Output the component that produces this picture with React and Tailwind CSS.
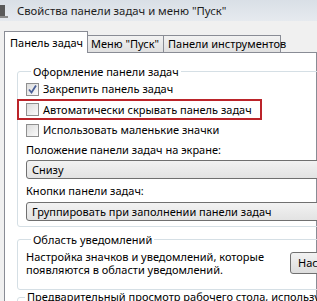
const Check = ({ checked }) => (
  <span className="w-[13px] h-[13px] shrink-0 border border-[#8f8f8f] bg-gradient-to-br from-[#dcdcdc] to-[#fbfbfb] flex items-center justify-center">
    {checked && (
      <svg width="11" height="11" viewBox="0 0 11 11">
        <path d="M2 5.5 L4.5 8.5 L9 1.5" fill="none" stroke="#4a5f97" strokeWidth="1.8" />
      </svg>
    )}
  </span>
);

const Select = ({ value }) => (
  <div className="h-[19px] w-[310px] border border-[#707070] rounded-[3px] bg-gradient-to-b from-[#f2f2f2] to-[#e3e3e3] flex items-center pl-[5px] whitespace-nowrap">
    {value}
  </div>
);

export default function App() {
  return (
    <div className="w-[317px] h-[301px] overflow-hidden bg-[#f0f0f0] text-black text-[11px] leading-[14px] font-['Noto_Sans',sans-serif]">
      {/* Title bar */}
      <div className="h-[21px] flex items-center bg-gradient-to-b from-[#d9dfe6] to-[#e6eaef]">
        <div className="w-[8px] h-[14px] flex flex-col justify-end">
          <div className="w-[5px] h-[11px] bg-[#5a5a5a]" />
          <div className="w-[8px] h-[2px] bg-[#8a8a8a]" />
        </div>
        <span className="ml-[9px] text-[11.3px] text-[#1e1e1e] whitespace-nowrap">Свойства панели задач и меню "Пуск"</span>
      </div>

      {/* Tabs */}
      <div className="flex items-end pl-[4px] pt-[10px] relative z-10 whitespace-nowrap">
        <div className="h-[22px] w-[84px] bg-white border border-b-0 border-[#898c95] flex items-center pl-[5px] -mb-px">
          Панель задач
        </div>
        <div className="h-[17px] w-[76px] border border-l-0 border-b-0 border-[#898c95] bg-gradient-to-b from-[#f2f2f2] to-[#e0e0e0] flex items-center pl-[3px]">
          Меню "Пуск"
        </div>
        <div className="h-[17px] w-[117px] border border-l-0 border-b-0 border-[#898c95] bg-gradient-to-b from-[#f2f2f2] to-[#e0e0e0] flex items-center pl-[4px]">
          Панели инструментов
        </div>
      </div>

      {/* Panel */}
      <div className="ml-[4px] h-[260px] border border-[#898c95] bg-white pl-[12px] pt-[11px] whitespace-nowrap">
        <fieldset className="border border-[#d5dfe5] rounded-[3px] pl-[8px] pb-[5px] w-[320px]">
          <legend className="ml-[5px] px-[2px] leading-[15px]">Оформление панели задач</legend>
          <div className="h-[20px] flex items-center gap-[4px]">
            <Check checked />
            <span>Закрепить панель задач</span>
          </div>
          <div className="h-[21px] -ml-[9px] pl-[7px] w-[245px] border-2 border-[#bb242a] flex items-center gap-[4px]">
            <Check />
            <span>Автоматически скрывать панель задач</span>
          </div>
          <div className="h-[20px] flex items-center gap-[4px]">
            <Check />
            <span>Использовать маленькие значки</span>
          </div>
          <div className="h-[20px] flex items-center">Положение панели задач на экране:</div>
          <Select value="Снизу" />
          <div className="h-[23px] flex items-center">Кнопки панели задач:</div>
          <Select value="Группировать при заполнении панели задач" />
        </fieldset>

        <fieldset className="mt-[5px] border border-[#d5dfe5] rounded-[3px] pl-[8px] pb-[13px] w-[320px]">
          <legend className="ml-[5px] px-[2px] leading-[15px]">Область уведомлений</legend>
          <div className="mt-[3px] flex items-center">
            <p className="w-[264px] leading-[13px]">
              Настройка значков и уведомлений, которые
              <br />
              появляются в области уведомлений.
            </p>
            <button className="h-[22px] px-[7px] border border-[#707070] rounded-[3px] bg-gradient-to-b from-[#f2f2f2] to-[#dddddd]">
              Настроить...
            </button>
          </div>
        </fieldset>

        <fieldset className="mt-[1px] border border-[#d5dfe5] rounded-[3px] w-[320px] h-[30px]">
          <legend className="ml-[7px] px-[2px] leading-[12px]">
            Предварительный просмотр рабочего стола, используя Aero Peek
          </legend>
        </fieldset>
      </div>
    </div>
  );
}
